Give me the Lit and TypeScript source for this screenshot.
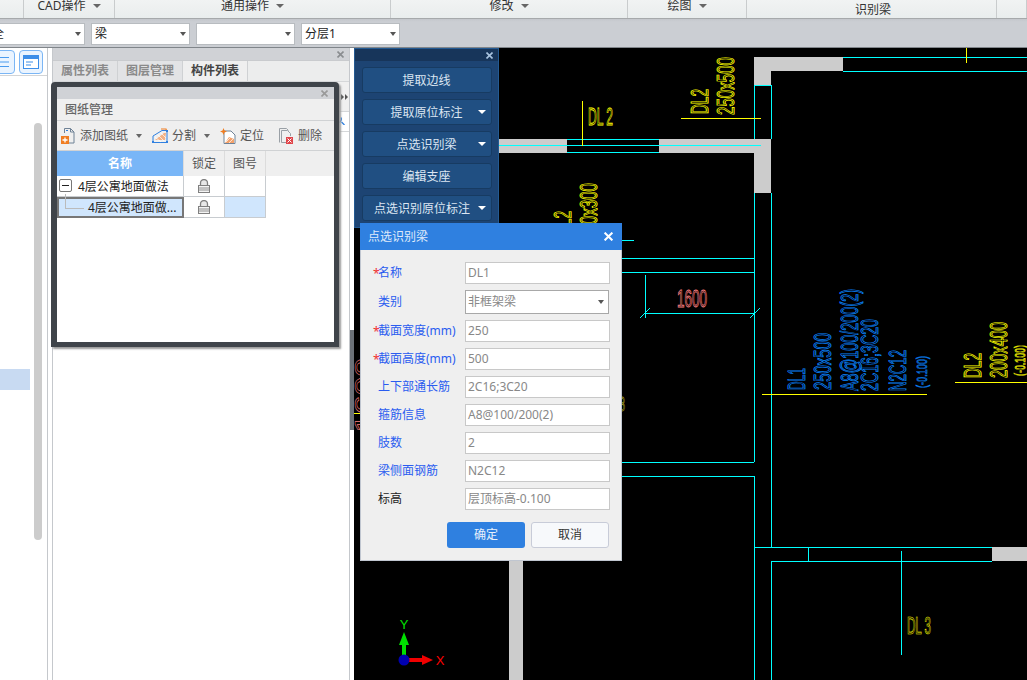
import { LitElement, html, svg, css } from "lit";
import { customElement } from "lit/decorators.js";

type Line = [number, number, number, number];
type CadLabel = { s: string; x: number; y: number; len: number; h: number; c: string; rot?: boolean; w?: number };

const CYAN = "#00ffff";
const YELLOW = "#ffff00";
const BLUE = "#0a84ff";
const PINK = "#ff8080";

const walls: Line[] = [
  [754, 57, 89, 14],
  [754, 57, 17, 28],
  [499, 139, 68, 14],
  [659, 139, 112, 14],
  [754, 139, 17, 54],
  [992, 547, 35, 14],
  [509, 561, 14, 119],
];

const cyanLines: Line[] = [
  [843, 57.5, 1027, 57.5],
  [843, 71.5, 1027, 71.5],
  [754.5, 85.5, 771.5, 85.5],
  [754.5, 85, 754.5, 139],
  [771.5, 85, 771.5, 139],
  [567, 139.5, 659, 139.5],
  [567, 152.5, 659, 152.5],
  [499, 145.5, 761, 145.5],
  [754.5, 193, 754.5, 462],
  [771.5, 193, 771.5, 547],
  [622, 240.5, 634, 240.5],
  [622, 258.5, 754, 258.5],
  [622, 272.5, 754, 272.5],
  [622, 462.5, 754, 462.5],
  [622, 476.5, 754, 476.5],
  [754.5, 476, 754.5, 680],
  [754, 547.5, 992, 547.5],
  [771, 561.5, 992, 561.5],
  [771.5, 561, 771.5, 680],
  [808.5, 547, 808.5, 561],
  [901.5, 551, 901.5, 655],
  [645.5, 275, 645.5, 318],
  [645, 313.5, 755, 313.5],
];

const yellowLines: Line[] = [
  [966.5, 48, 966.5, 63],
  [582.5, 101, 582.5, 146],
  [681, 118.5, 761, 118.5],
  [762, 394.5, 927, 394.5],
  [955, 382.5, 1027, 382.5],
  [354, 413.5, 360, 413.5],
];

const labels: CadLabel[] = [
  { s: "DL 2", x: 588, y: 125, len: 25, h: 17, c: YELLOW },
  { s: "DL2", x: 708, y: 114, len: 25, h: 17, c: YELLOW, rot: true },
  { s: "250x500", x: 734, y: 115, len: 58, h: 17, c: YELLOW, rot: true },
  { s: "250x300", x: 597, y: 241, len: 58, h: 17, c: YELLOW, rot: true },
  { s: "DL2", x: 571, y: 236, len: 25, h: 17, c: YELLOW, rot: true },
  { s: "1600", x: 677, y: 307, len: 30, h: 17, c: PINK },
  { s: "DL1", x: 805, y: 390, len: 22, h: 17, c: BLUE, rot: true },
  { s: "250x500", x: 831, y: 390, len: 57, h: 17, c: BLUE, rot: true },
  { s: "A8@100/200(2)", x: 858, y: 391, len: 102, h: 17, c: BLUE, rot: true },
  { s: "2C16;3C20", x: 878, y: 391, len: 72, h: 17, c: BLUE, rot: true },
  { s: "N2C12", x: 906, y: 391, len: 41, h: 17, c: BLUE, rot: true },
  { s: "(-0.100)", x: 927, y: 388, len: 32, h: 10, c: BLUE, rot: true, w: 0.7 },
  { s: "DL2", x: 981, y: 378, len: 25, h: 17, c: YELLOW, rot: true },
  { s: "200x400", x: 1007, y: 378, len: 56, h: 17, c: YELLOW, rot: true },
  { s: "(-0.100)", x: 1025, y: 376, len: 31, h: 10, c: YELLOW, rot: true, w: 0.7 },
  { s: "DL 3", x: 907, y: 634, len: 24, h: 17, c: YELLOW, w: 0.7 },
  { s: "1600", x: 372, y: 433, len: 75, h: 17, c: PINK, rot: true, w: 0.5 },
  { s: "8", x: 619, y: 411, len: 6, h: 14, c: "#a0a020", w: 0.8 },
];

const cadLabel = (t: CadLabel) => svg`<text
  transform="translate(${t.x} ${t.y})${t.rot ? " rotate(-90)" : ""}"
  font-family="Liberation Sans, sans-serif"
  font-size=${t.h / 0.72}
  textLength=${t.len}
  lengthAdjust="spacingAndGlyphs"
  fill="none"
  stroke=${t.c}
  stroke-width=${t.w ?? 0.9}
>${t.s}</text>`;

const cadLine = (l: Line, color: string) =>
  svg`<line x1=${l[0]} y1=${l[1]} x2=${l[2]} y2=${l[3]} stroke=${color} shape-rendering="crispEdges" />`;

const closeIcon = (color: string, size = 7) => html`<svg width=${size} height=${size} viewBox="0 0 7 7">
  <path d="M.5.5l6 6M6.5.5l-6 6" fill="none" stroke=${color} stroke-width="1.6" />
</svg>`;

const lockIcon = html`<svg width="12" height="14" viewBox="0 0 12 14">
  <path d="M2.500 6.500V4a3.500 3.500 0 0 1 7 0v2.500" fill="#e8e8e8" stroke="#808080" stroke-width="1.300" />
  <rect x=".5" y="6.500" width="11" height="7" fill="#f4f4f4" stroke="#808080" />
  <path d="M1 9h10M1 11h10" stroke="#909090" />
</svg>`;

const addIcon = html`<svg width="16" height="16" viewBox="0 0 16 16">
  <path d="M4.500 5V.5h6l3.500 3.500v11H9" fill="none" stroke="#6f8296" />
  <path d="M10.500.5v3.500H14" fill="none" stroke="#6f8296" />
  <path d="M6 2.500h2" stroke="#2f80e0" />
  <rect x="1" y="8" width="8" height="8" fill="#ef7d22" />
  <path d="M5 9.500v5M2.500 12h5" stroke="#fff" stroke-width="1.300" />
</svg>`;

const splitIcon = html`<svg width="16" height="16" viewBox="0 0 16 16">
  <path d="M1 14.500V8l9-5.500h5V14.500z" fill="none" stroke="#2f80e0" />
  <path d="M3 12l9-7h2l-1 7z" fill="#f4b183" />
  <path d="M3 9l6 5M6 7l6 6M9 5l5 5" stroke="#fff" stroke-width=".7" />
  <path d="M9 1l5 0 1 3" fill="none" stroke="#ef7d22" stroke-width="1.200" />
  <path d="M0 13h2v2H0zM14 13h2v2h-2zM14 2h2v2h-2z" fill="#2f80e0" />
</svg>`;

const locateIcon = html`<svg width="16" height="16" viewBox="0 0 16 16">
  <path d="M4 3h7l4 4v8.500H4z" fill="#fff" stroke="#6f8296" />
  <path d="M5 15l4-6 5 2v4z" fill="#f4a26b" />
  <path d="M6 14l4-4M9 15l4-4" stroke="#fff" stroke-width=".7" />
  <path d="M3.500 0l1 2.500 2.500 1-2.500 1-1 2.500-1-2.500L0 3.500l2.500-1z" fill="#ef7d22" />
</svg>`;

const deleteIcon = html`<svg width="16" height="16" viewBox="0 0 16 16">
  <path d="M1.500 14.500V.5h7l2 2M4 14.500H8" fill="none" stroke="#9aa0a6" />
  <path d="M3.500 2.500h6l3 3V8M3.500 2.500v12H8" fill="none" stroke="#9aa0a6" />
  <rect x="8" y="9" width="7" height="7" fill="#e0454a" />
  <path d="M9.500 10.500l4 4M13.500 10.500l-4 4" stroke="#fff" />
</svg>`;

@customElement("app-root")
export class AppRoot extends LitElement {
  static styles = css`
    :host {
      display: block;
      position: relative;
      width: 1027px;
      height: 680px;
      overflow: hidden;
      background: #fff;
      font-family: "Noto Sans", "Noto Sans CJK SC", sans-serif;
      font-size: 12px;
      line-height: 16px;
      color: #333;
    }

    .ribbon {
      display: flex;
      height: 18px;
      background: linear-gradient(#f1f3f3, #e9eded);
      border-bottom: 1px solid #a6a9ab;
      box-sizing: content-box;
    }
    .ribbon-cell {
      display: flex;
      align-items: center;
      justify-content: center;
      gap: 7px;
      box-sizing: border-box;
      height: 18px;
      padding: 0 0 6px 0;
      line-height: 12px;
      border-right: 1px solid #c9cccd;
      color: #333;
    }
    .ribbon-cell.low {
      padding: 2px 0 1px 3px;
    }
    .caret {
      width: 0;
      height: 0;
      border-left: 4px solid transparent;
      border-right: 4px solid transparent;
      border-top: 4px solid #666;
      flex: none;
    }

    .combos {
      display: flex;
      gap: 6px;
      height: 29px;
      padding-top: 4px;
      box-sizing: border-box;
      background: linear-gradient(#c4c7cc 0, #cbced3 3px);
      border-bottom: 1px solid #80858a;
      overflow: hidden;
    }
    .combo {
      display: flex;
      align-items: center;
      justify-content: space-between;
      box-sizing: border-box;
      flex: none;
      width: 99px;
      height: 22px;
      padding: 0 3px;
      background: #fff;
      border: 1px solid #b8bcc0;
      color: #222;
    }
    .combo.first {
      width: 88px;
      margin-left: -3px;
      padding-left: 0;
      text-indent: -6px;
    }
    .combo .caret {
      border-left-width: 3px;
      border-right-width: 3px;
      border-top-color: #555;
    }

    .main {
      display: flex;
      height: 632px;
    }
    .left {
      flex: none;
      width: 48px;
      height: 100%;
      box-sizing: border-box;
      border-right: 1px solid #c5c8cc;
      display: flex;
      flex-direction: column;
    }
    .left-bar {
      display: flex;
      gap: 4px;
      height: 28px;
      padding-top: 2px;
      box-sizing: border-box;
      border-bottom: 1px solid #d2d4d6;
      overflow: hidden;
      flex: none;
    }
    .icon-btn {
      display: flex;
      align-items: center;
      justify-content: center;
      flex: none;
      width: 24px;
      height: 24px;
      box-sizing: border-box;
      border: 1px solid #7bb6f5;
      border-radius: 4px;
      background: #eaf4ff;
    }
    .icon-btn.cut {
      margin-left: -9px;
    }
    .left-body {
      position: relative;
      flex: 1;
    }
    .track {
      position: absolute;
      left: 34px;
      top: 47px;
      width: 8px;
      height: 417px;
      border-radius: 4px;
      background: #ccc;
    }
    .pick {
      position: absolute;
      left: 0;
      top: 293px;
      width: 30px;
      height: 21px;
      background: #c8daf2;
    }

    .mid {
      flex: none;
      width: 298px;
      margin-left: 4px;
      height: 100%;
      box-sizing: border-box;
      border-left: 1px solid #c5c8cc;
      border-right: 1px solid #c5c8cc;
      display: flex;
      flex-direction: column;
    }
    .mid-title {
      display: flex;
      align-items: center;
      justify-content: flex-end;
      height: 12px;
      padding-right: 5px;
      background: #d0d2d6;
      flex: none;
    }
    .tabs {
      display: flex;
      height: 22px;
      background: #eceded;
      border-top: 1px solid #c9cbce;
      border-bottom: 1px solid #d5d7d9;
      box-sizing: border-box;
      flex: none;
    }
    .tab {
      display: flex;
      align-items: center;
      justify-content: center;
      width: 65px;
      box-sizing: border-box;
      border-right: 1px solid #cfd1d3;
      background: #e2e3e5;
      color: #8a8a8a;
      font-weight: 700;
    }
    .tab.on {
      background: #efefef;
      color: #444;
    }
    .mid-side {
      display: flex;
      align-items: center;
      justify-content: flex-end;
      gap: 1px;
      height: 30px;
      padding-right: 1px;
      background: #f0f0f0;
      border-bottom: 1px solid #d5d7d9;
      box-sizing: border-box;
      flex: none;
    }
    .mid-side i {
      width: 0;
      height: 0;
      border-top: 3px solid transparent;
      border-bottom: 3px solid transparent;
      border-left: 3px solid #555;
    }
    .mid-search {
      display: flex;
      justify-content: flex-end;
      height: 20px;
      padding: 4px 3px 0 0;
      box-sizing: border-box;
      border-bottom: 1px solid #d5d7d9;
      flex: none;
    }
    .strip {
      flex: none;
      width: 4px;
      height: 100px;
      margin-top: 282px;
      background: #6b7178;
    }

    .canvas {
      display: block;
      flex: none;
      background: #000;
    }

    .drawings {
      position: absolute;
      left: 51px;
      top: 82px;
      width: 288px;
      height: 265px;
      box-sizing: border-box;
      border: solid #3f444a;
      border-width: 5px 5px 5px 6px;
      border-radius: 4px 4px 0 0;
      box-shadow: 2px 2px 2px #9a9a9a;
      background: #fff;
    }
    .drawings-title {
      display: flex;
      align-items: center;
      justify-content: flex-end;
      height: 12px;
      padding-right: 6px;
      background: #d0d2d6;
    }
    .drawings-head {
      display: flex;
      align-items: center;
      height: 22px;
      box-sizing: border-box;
      padding-left: 8px;
      background: #efefef;
      border-bottom: 1px solid #d0d2d4;
      color: #666;
      font-weight: 500;
    }
    .tools {
      display: flex;
      align-items: center;
      height: 30px;
      box-sizing: border-box;
      padding-left: 3px;
      background: #efefef;
      border-bottom: 1px solid #d0d2d4;
      color: #555;
    }
    .tool {
      display: flex;
      align-items: center;
      gap: 4px;
      flex: none;
    }
    .tool .caret {
      margin-left: 4px;
      border-left-width: 3px;
      border-right-width: 3px;
    }
    .t1 {
      width: 92px;
    }
    .t2 {
      width: 68px;
    }
    .t3 {
      width: 58px;
    }
    .grid {
      display: grid;
      grid-template-columns: 127px 41px 41px 1fr;
      grid-template-rows: 25px 21px 21px;
    }
    .grid > div {
      display: flex;
      align-items: center;
      justify-content: center;
      box-sizing: border-box;
    }
    .grid .hd {
      background: #efefef;
      border-right: 1px solid #dcdcdc;
      color: #555;
    }
    .grid .hd.name {
      background: #79b6f7;
      color: #fff;
      font-weight: 700;
    }
    .grid .hd.rest {
      border-right: 0;
    }
    .grid .cell {
      border-right: 1px solid #c8ccd0;
      border-bottom: 1px solid #c8ccd0;
    }
    .grid .cell.sel {
      background: #d0e6fd;
    }
    .grid .blank {
      background: #fff;
    }
    .tree {
      position: relative;
      color: #222;
    }
    .grid .tree {
      justify-content: flex-start;
      padding: 1px 0 0 21px;
      border-right: 1px solid #c8ccd0;
    }
    .grid .tree.child {
      padding: 0 0 0 29px;
      background: #d0e6fd;
      border: 2px solid #777;
    }
    .expander {
      position: absolute;
      left: 2px;
      top: 3px;
      width: 13px;
      height: 13px;
      box-sizing: border-box;
      border: 1px solid #777;
      border-radius: 2px;
      background: #fff;
      display: flex;
      align-items: center;
      justify-content: center;
    }
    .expander::after {
      content: "";
      width: 7px;
      height: 1px;
      background: #222;
    }
    .branch {
      position: absolute;
      left: 6px;
      top: -5px;
      width: 18px;
      height: 14px;
      border-left: 1px solid #bbb;
      border-bottom: 1px solid #bbb;
    }

    .recog {
      position: absolute;
      left: 354px;
      top: 48px;
      width: 145px;
      height: 180px;
      box-sizing: border-box;
      background: #1d4473;
      border: 1px solid #245a92;
      color: #dce6f2;
    }
    .recog-title {
      display: flex;
      align-items: center;
      justify-content: flex-end;
      height: 12px;
      padding-right: 5px;
      background: #17355a;
    }
    .recog-list {
      display: flex;
      flex-direction: column;
      gap: 6px;
      padding: 6px 6px 0 7px;
    }
    .recog-btn {
      position: relative;
      display: flex;
      align-items: center;
      justify-content: center;
      height: 26px;
      padding: 2px 1px 0 0;
      box-sizing: border-box;
      background: #204f82;
      border: 1px solid #173b62;
      border-radius: 3px;
    }
    .recog-btn.wide {
      padding-right: 10px;
    }
    .recog-btn .caret {
      position: absolute;
      right: 5px;
      top: 10px;
      border-top-color: #fff;
      border-left-width: 4px;
      border-right-width: 4px;
    }

    .dialog {
      position: absolute;
      left: 360px;
      top: 223px;
      width: 262px;
      height: 338px;
      box-sizing: border-box;
      background: #efefef;
      border: 1px solid #c0c6d0;
      border-top: 0;
    }
    .dialog-title {
      display: flex;
      align-items: center;
      justify-content: space-between;
      height: 27px;
      margin: 0 -1px;
      padding: 0 9px 0 8px;
      background: #2f80e0;
      color: #dfeafa;
    }
    .form {
      display: grid;
      grid-template-columns: 104px 145px;
      row-gap: 6px;
      padding-top: 12px;
      align-items: center;
    }
    .label {
      position: relative;
      padding-left: 17px;
      color: #2a5cf0;
      white-space: nowrap;
    }
    .label.plain {
      color: #222;
    }
    .label i {
      position: absolute;
      left: 12px;
      top: 1px;
      font-style: normal;
      color: #f03030;
    }
    .value {
      height: 22px;
      box-sizing: border-box;
      padding: 0 2px;
      line-height: 20px;
      background: #fff;
      border: 1px solid #c8c8c8;
      color: #888;
      white-space: nowrap;
      overflow: hidden;
    }
    .value.select {
      display: flex;
      align-items: center;
      justify-content: space-between;
      width: 144px;
      height: 24px;
      border-color: #a8a8a8;
      padding-right: 4px;
    }
    .value.select .caret {
      border-left-width: 3px;
      border-right-width: 3px;
      border-top-color: #555;
    }
    .actions {
      display: flex;
      gap: 6px;
      padding: 12px 0 0 86px;
    }
    .action {
      display: flex;
      align-items: center;
      justify-content: center;
      width: 78px;
      height: 26px;
      box-sizing: border-box;
      border-radius: 3px;
      background: #2f80e0;
      color: #e8f1fc;
    }
    .action.cancel {
      background: #f7f9fb;
      border: 1px solid #c8ccd8;
      color: #333;
    }

    .axis-x {
      font: 13px "Liberation Sans", sans-serif;
    }
  `;

  private renderCanvas() {
    return html`<svg class="canvas" width="673" height="632" viewBox="354 48 673 632">
      ${walls.map((w) => svg`<rect x=${w[0]} y=${w[1]} width=${w[2]} height=${w[3]} fill="#cccccc" />`)}
      ${cyanLines.map((l) => cadLine(l, CYAN))}
      ${yellowLines.map((l) => cadLine(l, YELLOW))}
      <path d="M640 318l10-10M750 318l10-10" stroke=${CYAN} fill="none" />
      ${labels.map(cadLabel)}
      <rect x="402" y="645" width="4" height="15" fill="#00e000" />
      <path d="M404 632l5 13h-10z" fill="#00e000" />
      <rect x="404" y="658" width="19" height="4" fill="#f00000" />
      <path d="M433 660l-11 5v-10z" fill="#f00000" />
      <circle cx="404" cy="660" r="5.500" fill="#0000b0" />
      <text class="axis-x" x="404" y="629" text-anchor="middle" fill="#00e000">Y</text>
      <text class="axis-x" x="440" y="665" text-anchor="middle" fill="#ff0000">X</text>
    </svg>`;
  }

  private renderDrawings() {
    return html`<div class="drawings">
      <div class="drawings-title">${closeIcon("#999")}</div>
      <div class="drawings-head">图纸管理</div>
      <div class="tools">
        <div class="tool t1">${addIcon}<span>添加图纸</span><span class="caret"></span></div>
        <div class="tool t2">${splitIcon}<span>分割</span><span class="caret"></span></div>
        <div class="tool t3">${locateIcon}<span>定位</span></div>
        <div class="tool">${deleteIcon}<span>删除</span></div>
      </div>
      <div class="grid">
        <div class="hd name">名称</div>
        <div class="hd">锁定</div>
        <div class="hd">图号</div>
        <div class="hd rest"></div>
        <div class="tree cell"><span class="expander"></span>4层公寓地面做法</div>
        <div class="cell">${lockIcon}</div>
        <div class="cell"></div>
        <div class="blank"></div>
        <div class="tree child"><span class="branch"></span>4层公寓地面做...</div>
        <div class="cell">${lockIcon}</div>
        <div class="cell sel"></div>
        <div class="blank"></div>
      </div>
    </div>`;
  }

  private renderRecog() {
    return html`<div class="recog">
      <div class="recog-title">${closeIcon("#a9c4e0")}</div>
      <div class="recog-list">
        <div class="recog-btn">提取边线</div>
        <div class="recog-btn">提取原位标注<span class="caret"></span></div>
        <div class="recog-btn">点选识别梁<span class="caret"></span></div>
        <div class="recog-btn">编辑支座</div>
        <div class="recog-btn wide">点选识别原位标注<span class="caret"></span></div>
      </div>
    </div>`;
  }

  private renderDialog() {
    const rows: [string, string, boolean][] = [
      ["截面宽度(mm)", "250", true],
      ["截面高度(mm)", "500", true],
      ["上下部通长筋", "2C16;3C20", false],
      ["箍筋信息", "A8@100/200(2)", false],
      ["肢数", "2", false],
    ];
    return html`<div class="dialog">
      <div class="dialog-title"><span>点选识别梁</span>${closeIcon("#fff", 9)}</div>
      <div class="form">
        <div class="label"><i>*</i>名称</div>
        <div class="value">DL1</div>
        <div class="label">类别</div>
        <div class="value select">非框架梁<span class="caret"></span></div>
        ${rows.map(
          ([label, value, required]) => html`<div class="label">${required ? html`<i>*</i>` : ""}${label}</div>
            <div class="value">${value}</div>`,
        )}
        <div class="label">梁侧面钢筋</div>
        <div class="value">N2C12</div>
        <div class="label plain">标高</div>
        <div class="value">层顶标高-0.100</div>
      </div>
      <div class="actions">
        <div class="action">确定</div>
        <div class="action cancel">取消</div>
      </div>
    </div>`;
  }

  render() {
    const cells: [string, number, boolean, boolean][] = [
      ["", 24, false, false],
      ["CAD操作", 91, true, false],
      ["通用操作", 276, true, false],
      ["修改", 237, true, false],
      ["绘图", 119, true, false],
      ["识别梁", 250, false, true],
      ["", 30, false, false],
    ];
    return html`
      <div class="ribbon">
        ${cells.map(
          ([text, width, caret, low]) => html`<div
            class="ribbon-cell ${low ? "low" : ""}"
            style="width:${width}px"
          >
            ${text}${caret ? html`<span class="caret"></span>` : ""}
          </div>`,
        )}
      </div>
      <div class="combos">
        <div class="combo first"><span>全</span><span class="caret"></span></div>
        <div class="combo"><span>梁</span><span class="caret"></span></div>
        <div class="combo"><span></span><span class="caret"></span></div>
        <div class="combo"><span>分层1</span><span class="caret"></span></div>
      </div>
      <div class="main">
        <div class="left">
          <div class="left-bar">
            <div class="icon-btn cut">
              <svg width="14" height="12" viewBox="0 0 14 12">
                <path d="M1 1.500h12M1 6h12M1 10.500h12" stroke="#4a9bef" stroke-width="1.200" />
              </svg>
            </div>
            <div class="icon-btn">
              <svg width="16" height="14" viewBox="0 0 16 14">
                <rect x=".5" y=".5" width="15" height="13" fill="#fff" stroke="#3d8ee8" />
                <rect x="1" y="1" width="14" height="3" fill="#3d8ee8" />
                <path d="M3 7h7M3 10h5" stroke="#3d8ee8" stroke-width="1.200" />
              </svg>
            </div>
          </div>
          <div class="left-body">
            <div class="track"></div>
            <div class="pick"></div>
          </div>
        </div>
        <div class="mid">
          <div class="mid-title">${closeIcon("#8a8d90")}</div>
          <div class="tabs">
            <div class="tab">属性列表</div>
            <div class="tab">图层管理</div>
            <div class="tab on">构件列表</div>
          </div>
          <div class="mid-side"><i></i><i></i></div>
          <div class="mid-search">
            <svg width="8" height="9" viewBox="0 0 8 9">
              <path d="M0 6.500a3.500 3.500 0 0 0 3-5M3.500 6l3 3" fill="none" stroke="#2f80e0" stroke-width="1.300" />
            </svg>
          </div>
        </div>
        <div class="strip"></div>
        ${this.renderCanvas()}
      </div>
      ${this.renderDrawings()} ${this.renderRecog()} ${this.renderDialog()}
    `;
  }
}
